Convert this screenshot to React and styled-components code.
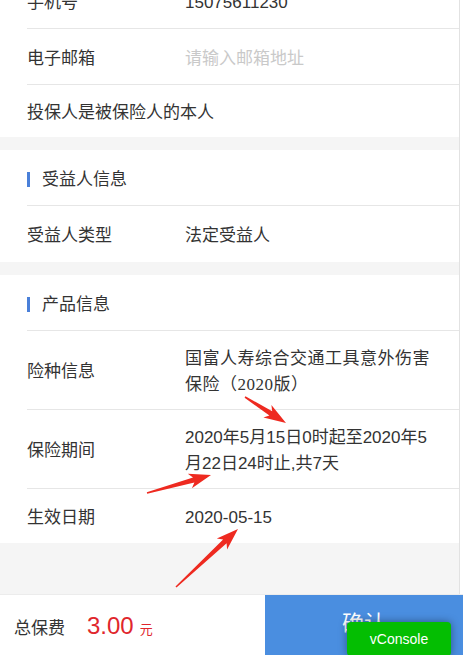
import React from "react";
import styled, { createGlobalStyle } from "styled-components";

const GlobalStyle = createGlobalStyle`
  html, body {
    margin: 0;
    padding: 0;
    background: #ffffff;
  }
  body {
    font-family: "Liberation Sans", "Noto Sans CJK SC", sans-serif;
    color: #333333;
  }
`;

const Page = styled.div`
  position: relative;
  width: 464px;
  height: 655px;
  overflow: hidden;
  display: flex;
  flex-direction: column;
`;

const Scroller = styled.div`
  flex: 1;
  overflow: hidden;
  width: 459px;
  background: #f5f5f5;
  border-right: 1px solid #e2e2e2;
`;

const List = styled.div`
  margin-top: -27px;
  display: flex;
  flex-direction: column;
  gap: 13px;
`;

const Card = styled.div`
  background: #ffffff;
  padding-left: 27px;
`;

const Row = styled.div`
  box-sizing: border-box;
  min-height: ${(p) => p.$h || 56}px;
  display: flex;
  align-items: center;
  padding: 15px 0 11px;
  border-bottom: 1px solid #e6e6e6;
  font-size: 17px;
  line-height: 26px;

  &:last-child {
    border-bottom: none;
  }
`;

const Label = styled.div`
  flex: 0 0 158px;
  color: #333333;
`;

const Value = styled.div`
  flex: 1;
  padding-right: 24px;
  color: ${(p) => (p.$placeholder ? "#c9c9c9" : "#333333")};
  font-family: ${(p) =>
    p.$serif
      ? '"Liberation Serif", "Noto Sans CJK SC", serif'
      : '"Liberation Sans", "Noto Sans CJK SC", sans-serif'};
  letter-spacing: ${(p) => (p.$serif ? "0.5px" : "0")};
`;

const SectionTitle = styled.div`
  display: flex;
  align-items: center;
  gap: 12px;
  color: #333333;

  &::before {
    content: "";
    width: 3px;
    height: 15px;
    background: #4a80d9;
  }
`;

const BottomBar = styled.div`
  flex: 0 0 61px;
  display: flex;
  width: 463px;
  background: #ffffff;
  border-top: 1px solid #ececec;
  box-sizing: border-box;
`;

const Total = styled.div`
  flex: 0 0 265px;
  display: flex;
  align-items: baseline;
  padding: 17px 0 0 14px;
  box-sizing: border-box;
  font-size: 17px;
  color: #333333;
`;

const Price = styled.span`
  margin-left: 22px;
  font-size: 24px;
  color: #e0262c;
`;

const Unit = styled.span`
  margin-left: 6px;
  font-size: 13px;
  color: #e0262c;
`;

const Confirm = styled.button`
  flex: 1;
  border: none;
  margin: 0;
  padding: 0 0 8px;
  background: #4a8ee0;
  color: #ffffff;
  font-family: "Noto Sans CJK SC", sans-serif;
  font-size: 22px;
`;

const VConsole = styled.div`
  position: absolute;
  right: 13px;
  bottom: -1px;
  width: 104px;
  height: 34px;
  border-radius: 4px;
  background: #04be02;
  box-shadow: 0 0 8px rgba(0, 0, 0, 0.4);
  color: #ffffff;
  font-size: 14px;
  display: flex;
  align-items: center;
  justify-content: center;
`;

const Overlay = styled.svg`
  position: absolute;
  left: 0;
  top: 0;
  pointer-events: none;
`;

// annotation arrows: tail -> tip
const arrows = [
  [245, 397, 286, 423],
  [147, 493, 211, 475],
  [176, 587, 238, 529],
];

function arrowPoints([x1, y1, x2, y2]) {
  const dx = x2 - x1;
  const dy = y2 - y1;
  const len = Math.hypot(dx, dy);
  const ux = dx / len;
  const uy = dy / len;
  const nx = -uy;
  const ny = ux;
  const headLen = 18;
  const nX = x2 - ux * headLen;
  const nY = y2 - uy * headLen;
  const bX = x2 - ux * (headLen + 4);
  const bY = y2 - uy * (headLen + 4);
  const pts = [
    [x1 + nx * 0.8, y1 + ny * 0.8],
    [nX + nx * 2.6, nY + ny * 2.6],
    [bX + nx * 7.5, bY + ny * 7.5],
    [x2, y2],
    [bX - nx * 7.5, bY - ny * 7.5],
    [nX - nx * 2.6, nY - ny * 2.6],
    [x1 - nx * 0.8, y1 - ny * 0.8],
  ];
  return pts.map((p) => p.map((v) => v.toFixed(1)).join(",")).join(" ");
}

export default function App() {
  return (
    <>
      <GlobalStyle />
      <Page>
        <Scroller>
          <List>
            <Card>
              <Row>
                <Label>手机号</Label>
                <Value>15075611230</Value>
              </Row>
              <Row>
                <Label>电子邮箱</Label>
                <Value $placeholder>请输入邮箱地址</Value>
              </Row>
              <Row $h={52}>投保人是被保险人的本人</Row>
            </Card>
            <Card>
              <Row>
                <SectionTitle>受益人信息</SectionTitle>
              </Row>
              <Row>
                <Label>受益人类型</Label>
                <Value>法定受益人</Value>
              </Row>
            </Card>
            <Card>
              <Row>
                <SectionTitle>产品信息</SectionTitle>
              </Row>
              <Row>
                <Label>险种信息</Label>
                <Value $serif>国富人寿综合交通工具意外伤害保险（2020版）</Value>
              </Row>
              <Row>
                <Label>保险期间</Label>
                <Value>2020年5月15日0时起至2020年5月22日24时止,共7天</Value>
              </Row>
              <Row $h={54}>
                <Label>生效日期</Label>
                <Value>2020-05-15</Value>
              </Row>
            </Card>
          </List>
        </Scroller>
        <BottomBar>
          <Total>
            总保费
            <Price>3.00</Price>
            <Unit>元</Unit>
          </Total>
          <Confirm>确认</Confirm>
        </BottomBar>
        <Overlay width="464" height="655" viewBox="0 0 464 655">
          {arrows.map((a, i) => (
            <polygon key={i} points={arrowPoints(a)} fill="#ee2a20" />
          ))}
        </Overlay>
        <VConsole>vConsole</VConsole>
      </Page>
    </>
  );
}
